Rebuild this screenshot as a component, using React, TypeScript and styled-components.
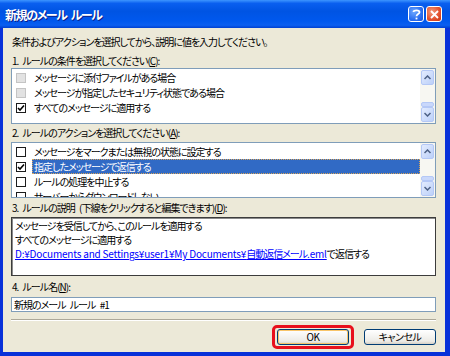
import React from "react";
import styled, { createGlobalStyle } from "styled-components";

const GlobalStyle = createGlobalStyle`
  html, body {
    margin: 0;
    padding: 0;
    background: #ffffff;
  }
  * {
    box-sizing: border-box;
  }
`;

const font = `"Noto Sans CJK JP", "Noto Sans", sans-serif`;

function App() {
  const conditions = [
    { id: 1, label: "メッセージに添付ファイルがある場合", checked: false, disabled: true },
    { id: 2, label: "メッセージが指定したセキュリティ状態である場合", checked: false, disabled: true },
    { id: 3, label: "すべてのメッセージに適用する", checked: true, disabled: false },
  ];
  const actions = [
    { id: 1, label: "メッセージをマークまたは無視の状態に設定する", checked: false, selected: false },
    { id: 2, label: "指定したメッセージで返信する", checked: true, selected: true },
    { id: 3, label: "ルールの処理を中止する", checked: false, selected: false },
    { id: 4, label: "サーバーからダウンロードしない", checked: false, selected: false },
  ];

  return (
    <>
      <GlobalStyle />
      <Window>
        <TitleBar>
          <Title>新規のメール ルール</Title>
          <TitleButtons>
            <CaptionButton>
              <svg width="9" height="11" viewBox="0 0 9 11">
                <path
                  d="M1.5 3 C1.5 0.8 7.5 0.8 7.5 3.2 C7.5 5 4.5 5 4.5 7.2"
                  fill="none"
                  stroke="#fff"
                  strokeWidth="1.8"
                />
                <rect x="3.6" y="8.6" width="1.8" height="1.8" fill="#fff" />
              </svg>
            </CaptionButton>
            <CaptionButton $close>
              <svg width="9" height="9" viewBox="0 0 9 9">
                <path d="M1 1 L8 8 M8 1 L1 8" stroke="#fff" strokeWidth="1.8" />
              </svg>
            </CaptionButton>
          </TitleButtons>
        </TitleBar>
        <Body>
          <Label $top={8}>条件およびアクションを選択してから、説明に値を入力してください。</Label>
          <Label $top={7}>
            1. ルールの条件を選択してください(<u>C</u>):
          </Label>
          <ListBox $top={1}>
            <Rows>
              {conditions.map((c) => (
                <Row key={c.id}>
                  <CheckBox $disabled={c.disabled}>{c.checked && <Tick />}</CheckBox>
                  <RowText>{c.label}</RowText>
                </Row>
              ))}
            </Rows>
            <ScrollBar />
          </ListBox>
          <Label $top={3}>
            2. ルールのアクションを選択してください(<u>A</u>):
          </Label>
          <ListBox $top={3}>
            <Rows>
              {actions.map((a) => (
                <Row key={a.id}>
                  <CheckBox>{a.checked && <Tick />}</CheckBox>
                  <RowText $selected={a.selected}>{a.label}</RowText>
                </Row>
              ))}
            </Rows>
            <ScrollBar />
          </ListBox>
          <Label $top={4}>
            3. ルールの説明 (下線をクリックすると編集できます)(<u>D</u>):
          </Label>
          <Description>
            <DescLine>メッセージを受信してから、このルールを適用する</DescLine>
            <DescLine>すべてのメッセージに適用する</DescLine>
            <DescLine>
              <Link>
                <Latin>D:¥Documents and Settings¥user1¥My Documents¥</Latin>
                自動返信メール<Latin>.eml</Latin>
              </Link>
              で返信する
            </DescLine>
          </Description>
          <Label $top={5}>
            4. ルール名(<u>N</u>):
          </Label>
          <NameInput>新規のメール ルール #1</NameInput>
          <Separator />
          <ButtonRow>
            <Marker>
              <Button $default>OK</Button>
            </Marker>
            <Button>キャンセル</Button>
          </ButtonRow>
        </Body>
      </Window>
    </>
  );
}

function Tick() {
  return (
    <svg width="8" height="8" viewBox="0 0 8 8">
      <path d="M1 4 L3 6 L7 1.5" fill="none" stroke="#000" strokeWidth="1.6" />
    </svg>
  );
}

function ScrollBar() {
  return (
    <Scroll>
      <ScrollButton>
        <svg width="7" height="5" viewBox="0 0 7 5">
          <path d="M0.5 4 L3.5 1 L6.5 4" fill="none" stroke="#4D6185" strokeWidth="1.5" />
        </svg>
      </ScrollButton>
      <Track>
        <Thumb />
      </Track>
      <ScrollButton>
        <svg width="7" height="5" viewBox="0 0 7 5">
          <path d="M0.5 1 L3.5 4 L6.5 1" fill="none" stroke="#4D6185" strokeWidth="1.5" />
        </svg>
      </ScrollButton>
    </Scroll>
  );
}

export default App;

const Window = styled.div`
  width: 450px;
  height: 356px;
  display: flex;
  flex-direction: column;
  background: #0831d9;
  font-family: ${font};
  font-feature-settings: "palt";
  font-size: 10px;
  color: #000;
`;

const TitleBar = styled.div`
  height: 28px;
  display: flex;
  align-items: center;
  justify-content: space-between;
  padding: 0 8px 0 5px;
  background: linear-gradient(
    to bottom,
    #3d95ff 0%,
    #0a5fef 12%,
    #0054e3 40%,
    #0058ee 75%,
    #0b5ff0 90%,
    #0040d0 100%
  );
`;

const Title = styled.span`
  color: #fff;
  font-weight: bold;
  font-size: 12px;
  letter-spacing: -1.4px;
  word-spacing: 3px;
  text-shadow: 1px 1px 0 #0a1e8a;
`;

const TitleButtons = styled.div`
  display: flex;
  gap: 2px;
`;

const CaptionButton = styled.div<{ $close?: boolean }>`
  width: 16px;
  height: 16px;
  border: 1px solid #fff;
  border-radius: 3px;
  display: flex;
  align-items: center;
  justify-content: center;
  background: ${({ $close }) =>
    $close
      ? "radial-gradient(circle at 35% 35%, #f29a7c 0%, #e2502c 60%, #c53512 100%)"
      : "radial-gradient(circle at 35% 35%, #6ea8ff 0%, #2a6ef0 60%, #1a52d8 100%)"};
`;

const Body = styled.div`
  flex: 1;
  margin: 0 5px 4px 3px;
  background: #ece9d8;
  padding: 0 9px 0 8px;
  display: flex;
  flex-direction: column;
`;

const Label = styled.div<{ $top: number }>`
  margin-top: ${({ $top }) => $top}px;
  height: 12px;
  line-height: 12px;
  white-space: nowrap;
  letter-spacing: -1px;
  word-spacing: 3px;
  padding-left: 1px;
`;

const ListBox = styled.div<{ $top: number }>`
  margin-top: ${({ $top }) => $top}px;
  height: 56px;
  border: 1px solid #7f9db9;
  background: #fff;
  display: flex;
  overflow: hidden;
`;

const Rows = styled.div`
  flex: 1;
  padding-top: 1px;
  display: flex;
  flex-direction: column;
  min-width: 0;
  overflow: hidden;
`;

const Row = styled.div`
  height: 15px;
  flex-shrink: 0;
  display: flex;
  align-items: center;
  padding-left: 4px;
`;

const CheckBox = styled.span<{ $disabled?: boolean }>`
  width: 10px;
  height: 10px;
  flex-shrink: 0;
  display: flex;
  align-items: center;
  justify-content: center;
  border: 1px solid ${({ $disabled }) => ($disabled ? "#c4c4c4" : "#1c1c1c")};
  background: ${({ $disabled }) => ($disabled ? "#e2e2e2" : "#fff")};
  margin-right: 6px;
`;

const RowText = styled.span<{ $selected?: boolean }>`
  flex: 1;
  height: 15px;
  line-height: 13px;
  padding-left: 1px;
  white-space: nowrap;
  overflow: hidden;
  letter-spacing: -1px;
  border: 1px dotted ${({ $selected }) => ($selected ? "#d7a45a" : "transparent")};
  background: ${({ $selected }) => ($selected ? "#316ac5" : "transparent")};
  color: ${({ $selected }) => ($selected ? "#fff" : "#000")};
`;

const Scroll = styled.div`
  width: 15px;
  flex-shrink: 0;
  display: flex;
  flex-direction: column;
  background: #f7f7f2;
  padding: 1px 0;
`;

const ScrollButton = styled.div`
  height: 15px;
  margin: 0 1px;
  border: 1px solid #b4c8f6;
  border-radius: 2px;
  background: linear-gradient(to bottom right, #e3ecfe, #bcd0f9);
  display: flex;
  align-items: center;
  justify-content: center;
`;

const Track = styled.div`
  flex: 1;
  display: flex;
  flex-direction: column;
  justify-content: flex-end;
`;

const Thumb = styled.div`
  height: 5px;
  margin: 0 1px;
  border: 1px solid #b4c8f6;
  border-radius: 2px;
  background: #c9d8fb;
`;

const Description = styled.div`
  margin-top: 3px;
  height: 59px;
  background: #fff;
  border: 1px solid #3c3c3c;
  box-shadow: inset 1px 1px 0 #8a8a8a;
  padding: 1px 3px 0 3px;
`;

const DescLine = styled.div`
  height: 14px;
  line-height: 14px;
  white-space: nowrap;
  letter-spacing: -1px;
`;

const Link = styled.span`
  color: #0000ff;
  text-decoration: underline;
`;

const Latin = styled.span`
  letter-spacing: -0.2px;
`;

const NameInput = styled.div`
  margin-top: 4px;
  height: 15px;
  line-height: 13px;
  border: 1px solid #7f9db9;
  background: #fff;
  padding-left: 2px;
  white-space: nowrap;
  letter-spacing: -1px;
  word-spacing: 3px;
`;

const Separator = styled.div`
  margin-top: 7px;
  height: 2px;
  border-top: 1px solid #aca899;
  border-bottom: 1px solid #fff;
`;

const ButtonRow = styled.div`
  margin-top: 4px;
  display: flex;
  justify-content: flex-end;
  align-items: center;
  gap: 10px;
`;

const Marker = styled.div`
  border: 3px solid #e8101c;
  border-radius: 5px;
  padding: 1px 2px;
`;

const Button = styled.div<{ $default?: boolean }>`
  width: 72px;
  height: 16px;
  line-height: 14px;
  text-align: center;
  border: 1px solid #003c74;
  border-radius: 3px;
  background: linear-gradient(to bottom, #ffffff, #ecebe6 80%, #d6d0c5);
  box-shadow: ${({ $default }) =>
    $default ? "inset 0 0 0 1px #f8c56a" : "none"};
  letter-spacing: -0.5px;
`;
